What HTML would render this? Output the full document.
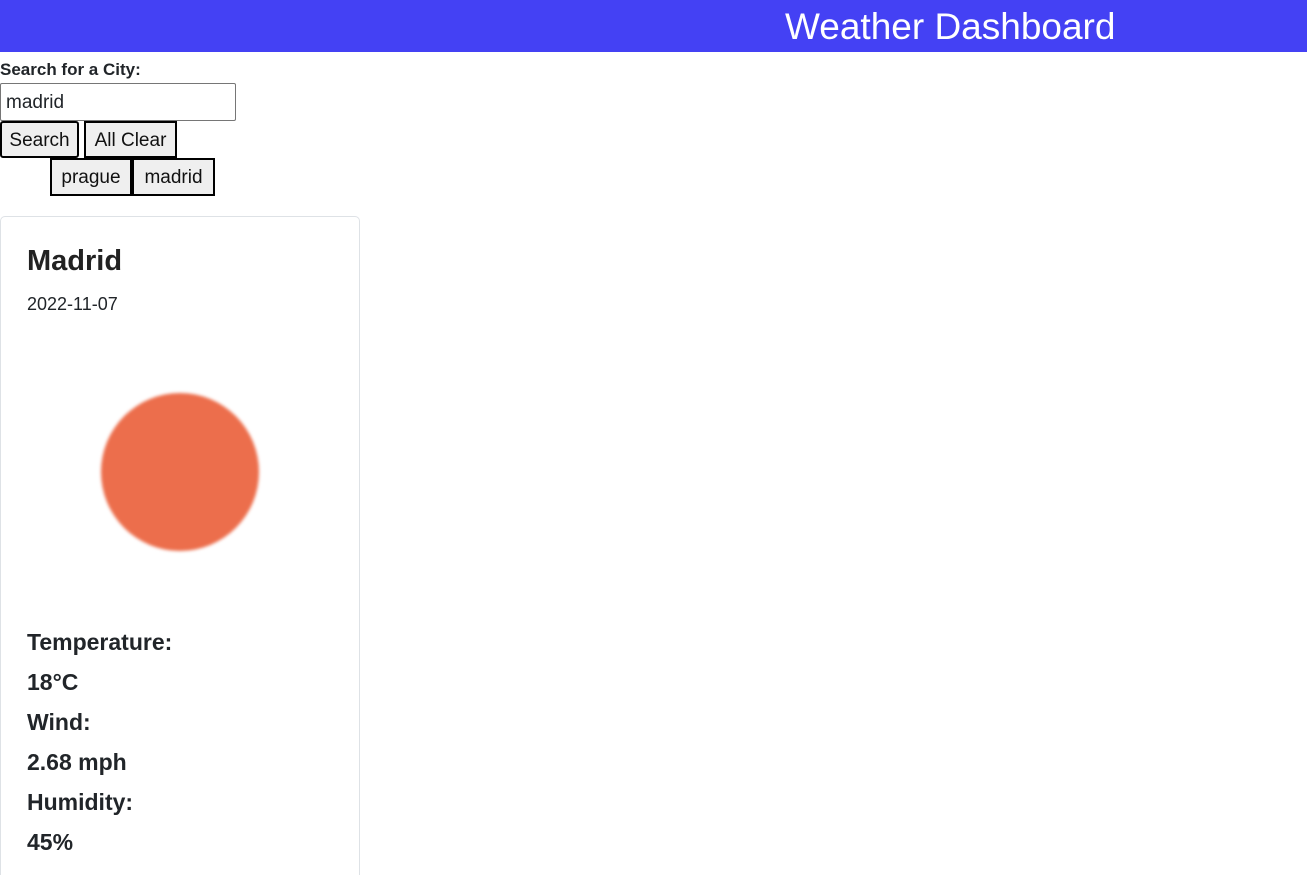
<!DOCTYPE html>
<html style="overflow:hidden;height:875px"><head><style>
body{margin:0;font-family:"Liberation Sans",sans-serif;color:#212529;background:#fff;width:1307px;height:875px;overflow:hidden;position:relative}
.hdr{position:absolute;left:0;top:0;width:1307px;height:52px;background:#4441f4}
.hdr span{position:absolute;left:785px;top:4px;color:#fff;font-size:37px;line-height:46px}
.a{position:absolute;white-space:nowrap}
.btn{position:absolute;background:#efefef;border:2px solid #000;box-sizing:border-box;font-size:19px;text-align:center;line-height:36px;color:#111}
.card{position:absolute;left:0;top:216px;width:360px;height:659px;border:1px solid #dee2e6;border-bottom:none;border-radius:5px 5px 0 0;box-sizing:border-box}
.t{position:absolute;left:27px;font-size:23px;font-weight:bold;color:#212529}
</style></head><body>
<div class="hdr"><span>Weather Dashboard</span></div>
<div class="a" style="left:0;top:60px;font-size:17px;font-weight:bold">Search for a City:</div>
<div class="a" style="left:0;top:83px;width:236px;height:38px;border:1px solid #767676;box-sizing:border-box;border-radius:2px;font-size:19px;line-height:38px;padding-left:5px">madrid</div>
<div class="btn" style="left:0;top:121px;width:79px;height:37px;border-radius:3px">Search</div>
<div class="btn" style="left:84px;top:121px;width:93px;height:37px">All Clear</div>
<div class="btn" style="left:50px;top:158px;width:82px;height:38px">prague</div>
<div class="btn" style="left:132px;top:158px;width:83px;height:38px">madrid</div>
<div class="card"></div>
<div class="a" style="left:27px;top:245px;font-size:29px;font-weight:bold;color:#222">Madrid</div>
<div class="a" style="left:27px;top:294px;font-size:18px">2022-11-07</div>
<div class="a" style="left:101px;top:393px;width:158px;height:158px;border-radius:50%;background:#ec6e4c;filter:blur(1.5px)"></div>
<div class="t" style="top:629px">Temperature:</div>
<div class="t" style="top:669px">18°C</div>
<div class="t" style="top:709px">Wind:</div>
<div class="t" style="top:749px">2.68 mph</div>
<div class="t" style="top:789px">Humidity:</div>
<div class="t" style="top:829px">45%</div>
</body></html>
